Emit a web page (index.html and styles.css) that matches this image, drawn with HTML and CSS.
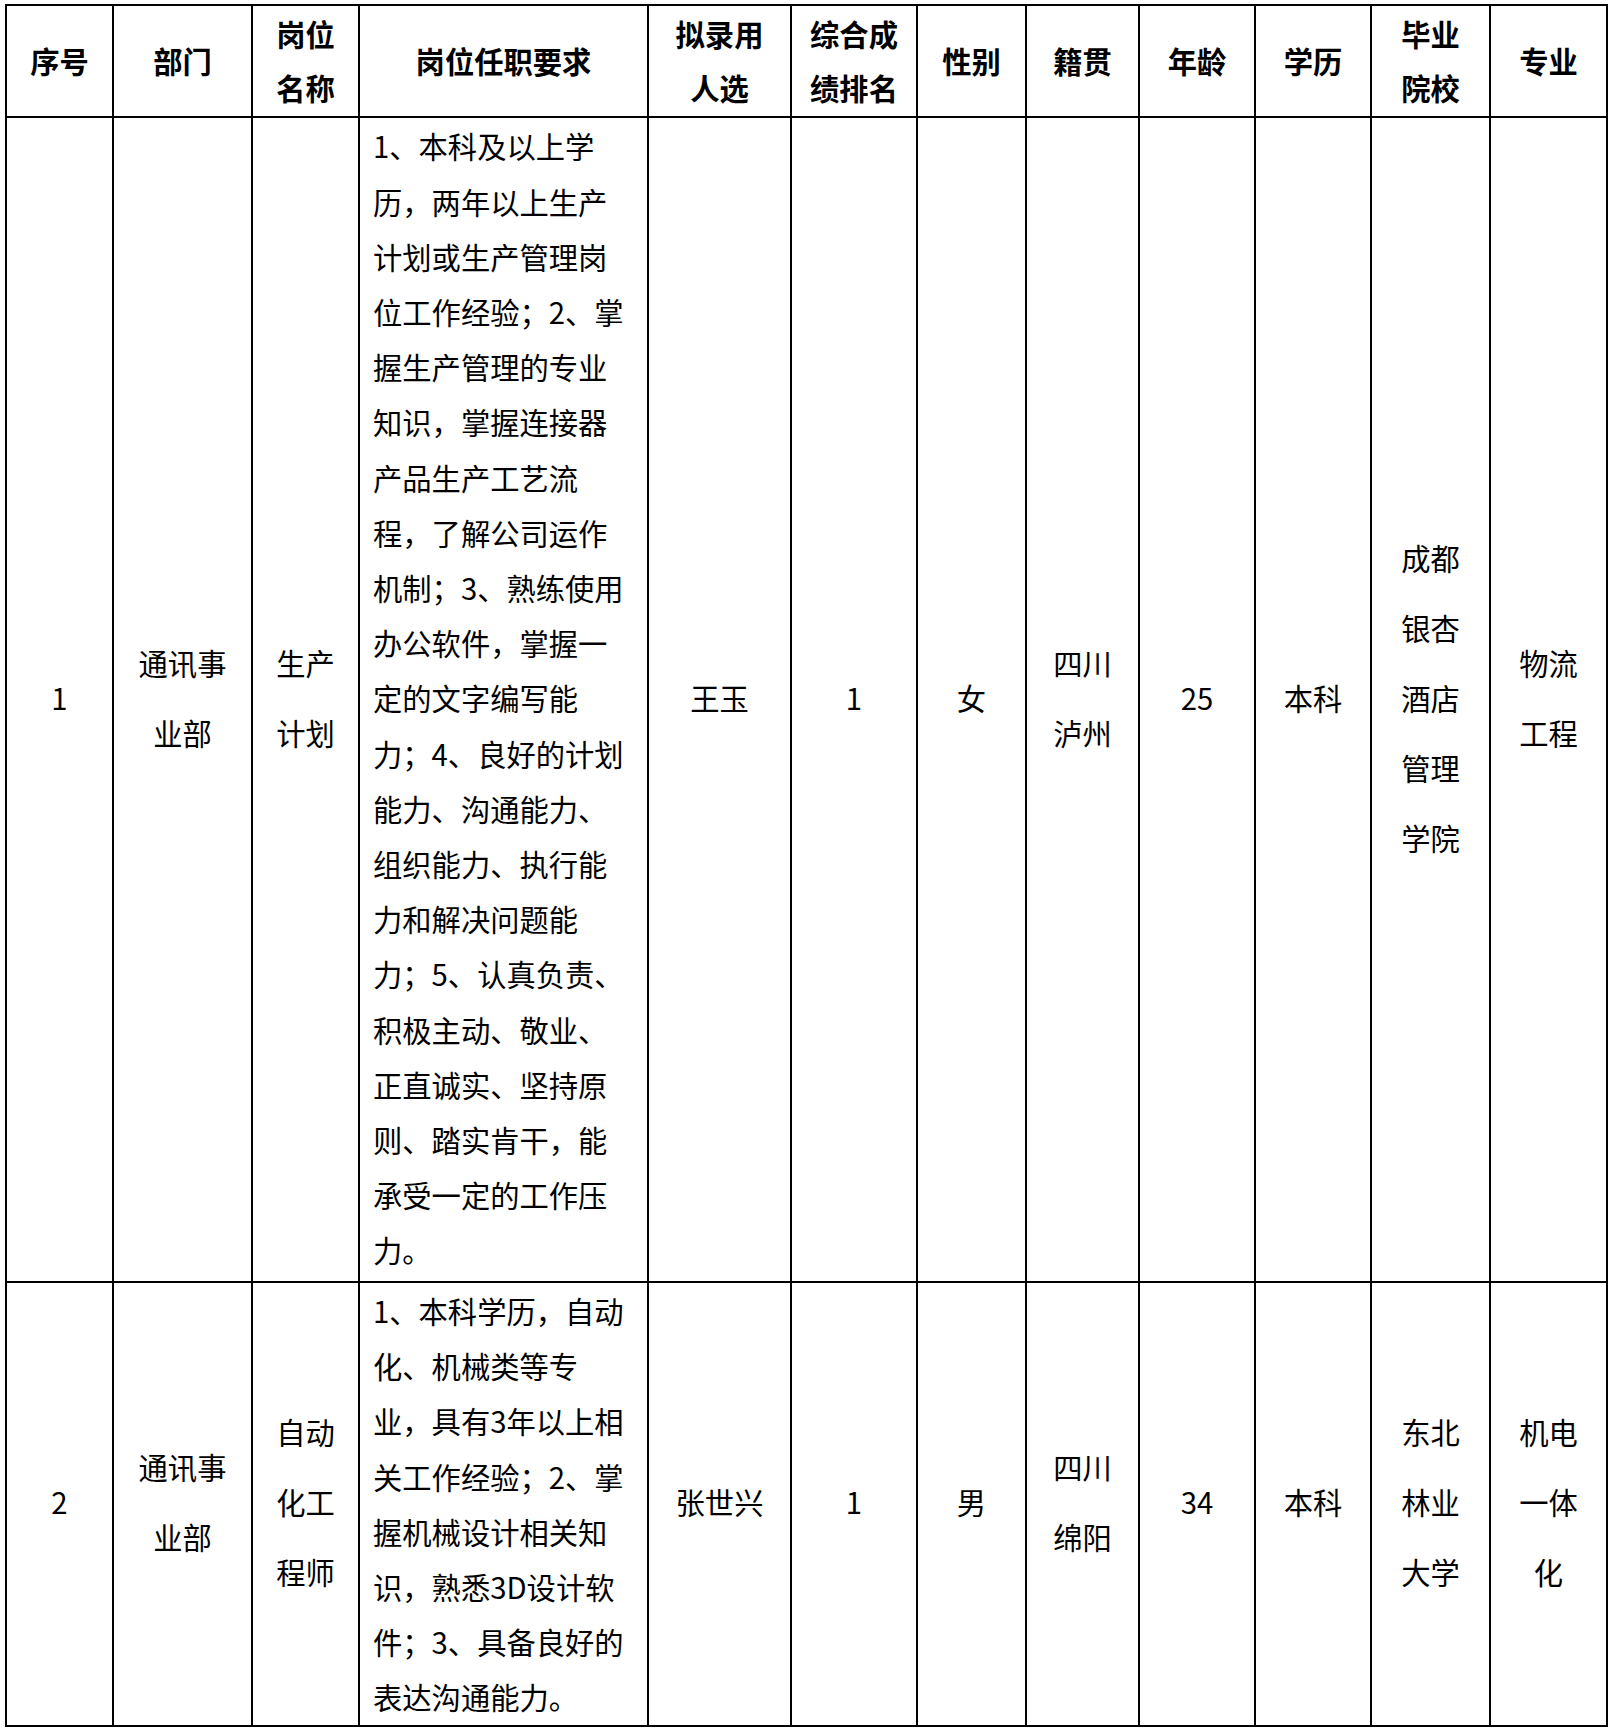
FILE: index.html
```html
<!DOCTYPE html>
<html lang="zh-CN">
<head>
<meta charset="utf-8">
<title>拟录用人选</title>
<link rel="stylesheet" href="styles.css">
</head>
<body>
<div class="page">
<table class="grid">
  <colgroup>
    <col class="c1"><col class="c2"><col class="c3"><col class="c4"><col class="c5"><col class="c6">
    <col class="c7"><col class="c8"><col class="c9"><col class="c10"><col class="c11"><col class="c12">
  </colgroup>
  <thead>
    <tr class="head">
      <th>序号</th>
      <th>部门</th>
      <th>岗位<br>名称</th>
      <th>岗位任职要求</th>
      <th>拟录用<br>人选</th>
      <th>综合成<br>绩排名</th>
      <th>性别</th>
      <th>籍贯</th>
      <th>年龄</th>
      <th>学历</th>
      <th>毕业<br>院校</th>
      <th>专业</th>
    </tr>
  </thead>
  <tbody>
    <tr class="row-one">
      <td class="mid">1</td>
      <td class="mid">通讯事<br>业部</td>
      <td class="mid">生产<br>计划</td>
      <td class="req req-long">1、本科及以上学<br>历，两年以上生产<br>计划或生产管理岗<br>位工作经验；2、掌<br>握生产管理的专业<br>知识，掌握连接器<br>产品生产工艺流<br>程，了解公司运作<br>机制；3、熟练使用<br>办公软件，掌握一<br>定的文字编写能<br>力；4、良好的计划<br>能力、沟通能力、<br>组织能力、执行能<br>力和解决问题能<br>力；5、认真负责、<br>积极主动、敬业、<br>正直诚实、坚持原<br>则、踏实肯干，能<br>承受一定的工作压<br>力。</td>
      <td class="mid">王玉</td>
      <td class="mid">1</td>
      <td class="mid">女</td>
      <td class="mid">四川<br>泸州</td>
      <td class="mid">25</td>
      <td class="mid">本科</td>
      <td class="mid">成都<br>银杏<br>酒店<br>管理<br>学院</td>
      <td class="mid">物流<br>工程</td>
    </tr>
    <tr class="row-two">
      <td class="mid">2</td>
      <td class="mid">通讯事<br>业部</td>
      <td class="mid">自动<br>化工<br>程师</td>
      <td class="req">1、本科学历，自动<br>化、机械类等专<br>业，具有3年以上相<br>关工作经验；2、掌<br>握机械设计相关知<br>识，熟悉3D设计软<br>件；3、具备良好的<br>表达沟通能力。</td>
      <td class="mid">张世兴</td>
      <td class="mid">1</td>
      <td class="mid">男</td>
      <td class="mid">四川<br>绵阳</td>
      <td class="mid">34</td>
      <td class="mid">本科</td>
      <td class="mid">东北<br>林业<br>大学</td>
      <td class="mid">机电<br>一体<br>化</td>
    </tr>
  </tbody>
</table>
</div>
</body>
</html>
```
FILE: styles.css
```css
html, body {
  margin: 0;
  padding: 0;
  background: #ffffff;
}

body {
  font-family: "Noto Sans CJK SC", "Noto Sans", sans-serif;
  color: #000000;
}

.page {
  padding: 4px 0 0 5px;
}

.grid {
  border-collapse: separate;
  border-spacing: 0;
  table-layout: fixed;
  width: 1603px;
  border-top: 2px solid #000;
  border-left: 2px solid #000;
  font-size: 29.3px;
}

.c1 { width: 107px; }
.c2 { width: 139px; }
.c3 { width: 107px; }
.c4 { width: 289px; }
.c5 { width: 143px; }
.c6 { width: 126px; }
.c7 { width: 109px; }
.c8 { width: 113px; }
.c9 { width: 116px; }
.c10 { width: 116px; }
.c11 { width: 119px; }
.c12 { width: 117px; }

.grid th,
.grid td {
  border-right: 2px solid #000;
  border-bottom: 2px solid #000;
  padding: 0;
  text-align: center;
  vertical-align: middle;
  white-space: nowrap;
}

.grid th {
  font-weight: 700;
  line-height: 54px;
  padding-bottom: 2px;
}

.head { height: 112px; }
.row-one { height: 1165px; }
.row-two { height: 443px; }

.grid td.mid {
  line-height: 70px;
  font-weight: 400;
  padding-bottom: 5px;
}

.grid td.req {
  text-align: left;
  padding-left: 13px;
  line-height: 55.2px;
  font-weight: 400;
}

.grid td.req-long {
  padding-bottom: 3px;
}
```
